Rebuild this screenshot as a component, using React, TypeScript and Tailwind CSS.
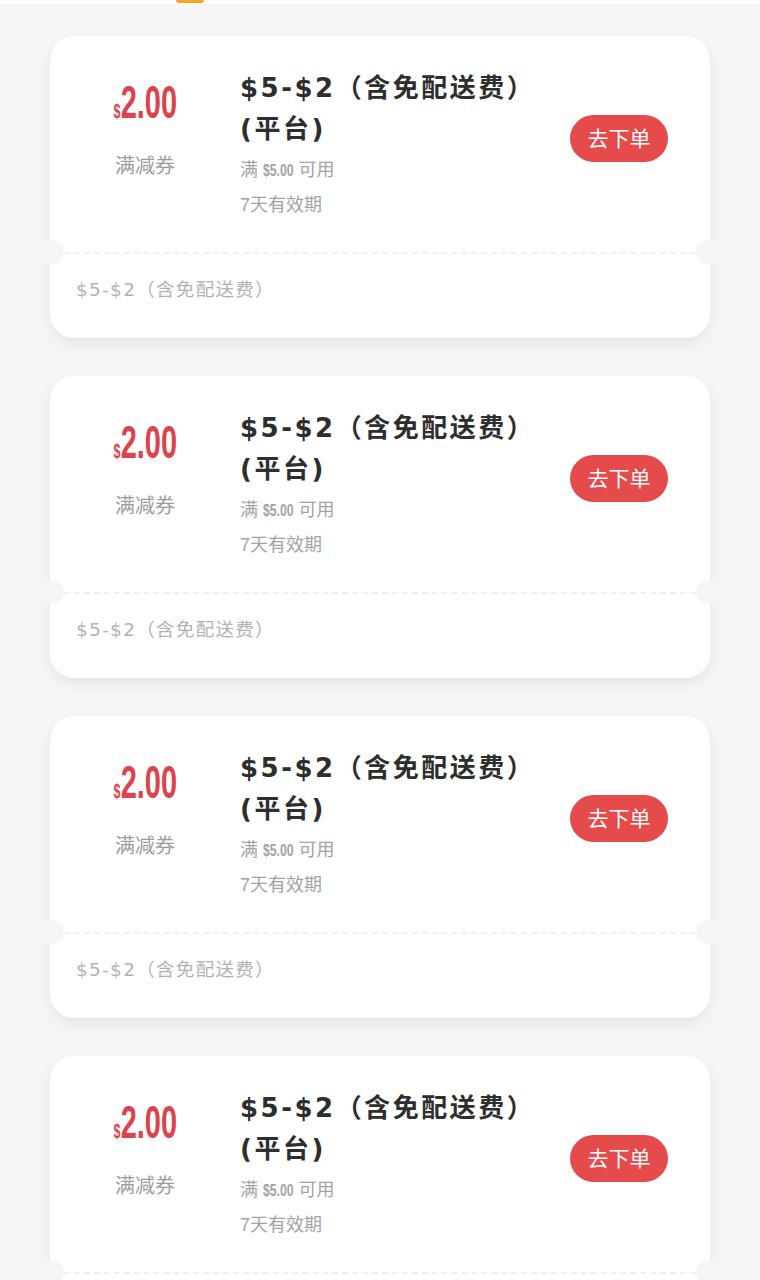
import React from "react";

const CJK = "font-['Liberation_Sans','Noto_Sans_CJK_SC',sans-serif]";
const DJ = "font-['DejaVu_Sans','Noto_Sans_CJK_SC',sans-serif]";

function Coupon() {
  return (
    <div className="relative bg-white rounded-[24px] shadow-[0_6px_14px_rgba(0,0,0,0.07)]">
      {/* notches */}
      <div className="absolute left-[-10px] top-[204px] w-6 h-6 rounded-full bg-[#f6f6f6]" />
      <div className="absolute right-[-10px] top-[204px] w-6 h-6 rounded-full bg-[#f6f6f6]" />
      <div className="flex items-start pt-[32px] pb-[30px] pr-[42px]">
        <div className="w-[190px] shrink-0 flex flex-col items-center mt-[11px]">
          <div className="h-[46px] leading-[46px] whitespace-nowrap text-[#dc434d] font-['Liberation_Sans',sans-serif] font-bold">
            <span className="inline-block scale-x-[0.63] mx-[-19px]">
              <span className="text-[20px]">$</span>
              <span className="text-[46px]">2.00</span>
            </span>
          </div>
          <div className={`mt-[27px] text-[20px] leading-[28px] text-[#9c9c9c] ${CJK}`}>满减券</div>
        </div>
        <div className={`flex-1 ${CJK}`}>
          <div className={`text-[26px] leading-[41px] font-bold text-[#2e2e2e] tracking-[2.5px] ${DJ}`}>
            <div className="whitespace-nowrap">$5-$2（含免配送费）</div>
            <div>(平台)</div>
          </div>
          <div className="mt-[3px] text-[18px] leading-[34px] text-[#a3a3a3]">
            满{" "}
            <span className="inline-block font-bold scale-x-[0.72] mx-[-6px] text-[17px]">$5.00</span>{" "}
            可用
          </div>
          <div className="text-[18px] leading-[34px] text-[#a3a3a3]">7天有效期</div>
        </div>
        <div
          className={`mt-[47px] w-[98px] h-[47px] shrink-0 rounded-full bg-[#e64b4b] text-white text-[21px] flex items-center justify-center ${CJK}`}
        >
          去下单
        </div>
      </div>
      <div className="mx-[14px] border-t-2 border-dashed border-[#efefef]" />
      <div className={`pl-[26px] pt-[24px] pb-[36px] text-[18.5px] leading-[24px] text-[#b3b3b3] tracking-[1.3px] ${DJ}`}>
        $5-$2（含免配送费）
      </div>
    </div>
  );
}

export default function App() {
  return (
    <div className="w-[760px] h-[1280px] overflow-hidden bg-[#f6f6f6]">
      <div className="h-[4px] bg-white relative">
        <div className="absolute left-[176px] top-0 w-[28px] h-[3px] rounded-b-[3px] bg-[#f5a623]" />
      </div>
      <div className="flex flex-col gap-[38px] pt-[32px] px-[50px]">
        <Coupon />
        <Coupon />
        <Coupon />
        <Coupon />
      </div>
    </div>
  );
}
